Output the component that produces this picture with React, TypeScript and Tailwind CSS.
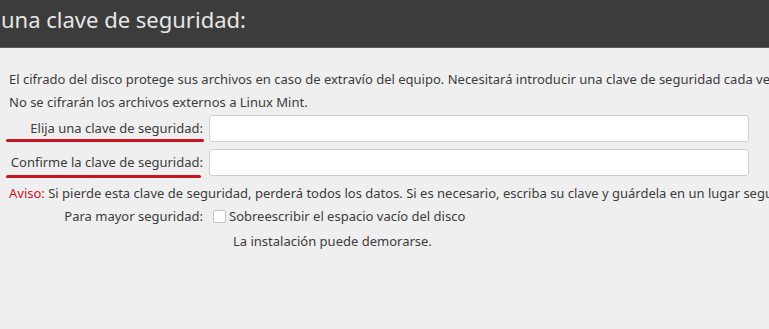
import React from "react";

export default function App() {
  const font = { fontFamily: '"Noto Sans", "Open Sans", sans-serif' };
  return (
    <div className="w-[769px] h-[329px] bg-[#efefef] overflow-hidden text-[#3c3c3c]" style={font}>
      <div className="h-[48px] bg-[#3c3c3c] border-b border-[#5a5a5a] flex items-start pt-[4px] pl-[1px]">
        <span className="text-[22px] text-[#e6e6e6] leading-[30px] whitespace-nowrap">una clave de seguridad:</span>
      </div>
      <div className="pl-[9px] pt-[20px] text-[13px] leading-[23px] whitespace-nowrap">
        <p>El cifrado del disco protege sus archivos en caso de extravío del equipo. Necesitará introducir una clave de seguridad cada vez que arranque el equipo.</p>
        <p>No se cifrarán los archivos externos a Linux Mint.</p>
        <div className="mt-[1px] flex flex-col gap-[7px]">
          <div className="flex items-center">
            <div className="w-[194px] relative text-right">
              <span>Elija una clave de seguridad:</span>
              <div className="absolute left-[-3px] right-[-1px] top-[22px] h-[3px] rounded-full bg-[#c8141e]" />
            </div>
            <div className="ml-[6px] w-[540px] h-[27px] bg-white border border-[#cdcdcd] rounded-[3px]" />
          </div>
          <div className="flex items-center">
            <div className="w-[194px] relative text-right">
              <span>Confirme la clave de seguridad:</span>
              <div className="absolute left-[-3px] right-[2px] top-[24px] h-[3px] rounded-full bg-[#c8141e]" />
            </div>
            <div className="ml-[6px] w-[540px] h-[27px] bg-white border border-[#cdcdcd] rounded-[3px]" />
          </div>
        </div>
        <p className="mt-[6px]"><span className="text-[#c7162b]">Aviso:</span> Si pierde esta clave de seguridad, perderá todos los datos. Si es necesario, escriba su clave y guárdela en un lugar seguro.</p>
        <div className="flex items-center">
          <div className="w-[194px] text-right">Para mayor seguridad:</div>
          <div className="ml-[10px] w-[13px] h-[13px] bg-white border border-[#c4c4c4] rounded-[2px]" />
          <span className="ml-[3px]">Sobreescribir el espacio vacío del disco</span>
        </div>
        <p className="mt-[2px] pl-[224px]">La instalación puede demorarse.</p>
      </div>
    </div>
  );
}
